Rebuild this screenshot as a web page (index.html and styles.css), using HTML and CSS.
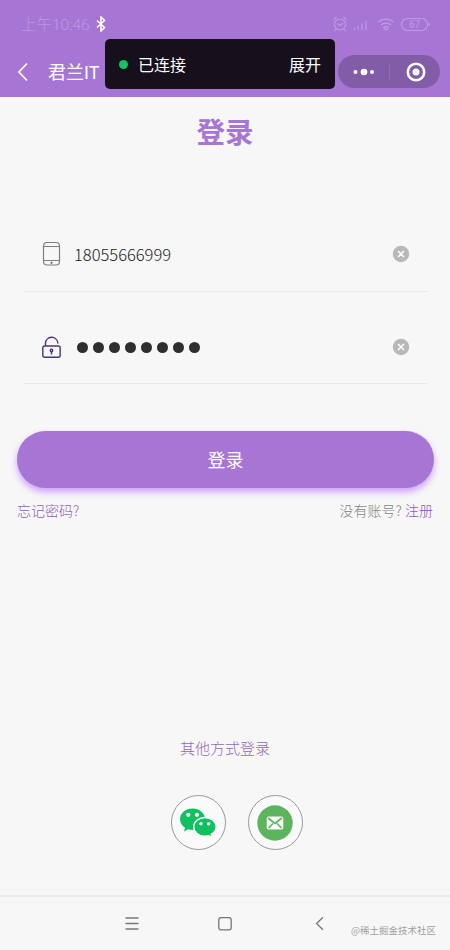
FILE: index.html
```
<!DOCTYPE html>
<html lang="zh-CN">
<head>
  <meta charset="utf-8"/>
  <title>登录</title>
  <link rel="stylesheet" href="styles.css">
</head>
<body>
  <header class="header">
    <div class="status-bar">
      <span class="time">上午10:46</span>
      <svg class="bluetooth" width="12" height="16" viewBox="0 0 12 16"><path d="M2 4.500l7.500 7L6 15V1l3.500 3.500L2 11.500"/></svg>
      <div class="status-icons">
        <svg width="98" height="18" viewBox="0 0 98 18">
          <circle cx="8" cy="9.500" r="5.500"/>
          <path d="M1.500 5l3-3M14.500 5l-3-3M5.500 8.500l2.500 2 3-2.500M4 14l-1.500 2M12 14l1.500 2"/>
          <path d="M22.500 15v-2M26 15v-4M30 15V8.500M34 15V5.500"/>
          <path d="M46.500 7a11 11 0 0 1 15 0M49 10a7.500 7.500 0 0 1 10 0M51.500 12.500a4 4 0 0 1 5 0L54 15z"/>
          <rect x="69.500" y="3.500" width="26" height="12" rx="6"/>
          <path d="M97.300 8v3"/>
          <text x="82.500" y="13.300" text-anchor="middle">67</text>
        </svg>
      </div>
    </div>
    <div class="nav-bar">
      <svg class="back" width="12" height="20" viewBox="0 0 12 20"><path d="M10 1.500L2 10l8 8.500"/></svg>
      <span class="nav-title">君兰IT</span>
      <div class="capsule">
        <svg width="22" height="10" viewBox="0 0 22 10"><circle cx="2.500" cy="5" r="2"/><circle cx="11" cy="5" r="3.300"/><circle cx="19" cy="5" r="2"/></svg>
        <i class="capsule-line"></i>
        <svg width="20" height="20" viewBox="0 0 20 20"><circle class="ring" cx="10" cy="10" r="8.200"/><circle cx="10" cy="10" r="3.500"/></svg>
      </div>
    </div>
    <div class="toast">
      <i class="dot"></i>
      <span>已连接</span>
      <span class="expand">展开</span>
    </div>
  </header>

  <main class="page">
    <h1>登录</h1>
    <div class="form">
      <div class="field phone">
        <svg class="field-icon" width="20" height="26" viewBox="0 0 20 26"><rect x="2.500" y="1.500" width="16" height="22.500" rx="3.500"/><path d="M2.500 5.500h16M2.500 19.500h16"/><circle class="fill" cx="10.500" cy="21.700" r="1"/></svg>
        <span class="value">18055666999</span>
        <svg class="clear" width="18" height="18" viewBox="0 0 18 18"><circle cx="9" cy="9" r="8.200"/><path d="M6 6l6 6M12 6l-6 6"/></svg>
      </div>
      <div class="field password">
        <svg class="field-icon" width="20" height="26" viewBox="0 0 20 26"><rect x="1.800" y="12" width="17.400" height="11.300" rx="2"/><path d="M4.500 12V9a6.200 6.200 0 0 1 12.300-.500v1M10.500 17v3.500"/><circle cx="10.500" cy="16.500" r="1.200"/></svg>
        <span class="value dots"><i></i><i></i><i></i><i></i><i></i><i></i><i></i><i></i></span>
        <svg class="clear" width="18" height="18" viewBox="0 0 18 18"><circle cx="9" cy="9" r="8.200"/><path d="M6 6l6 6M12 6l-6 6"/></svg>
      </div>
    </div>

    <button class="btn">登录</button>
    <div class="links">
      <a class="forget">忘记密码?</a>
      <span class="register">没有账号? <a>注册</a></span>
    </div>

    <p class="other-title">其他方式登录</p>
    <div class="others">
      <div class="other">
        <svg width="38" height="32" viewBox="0 0 38 32">
          <path class="wechat" d="M13.500 1.500C6.500 1.500 1 6.200 1 12.300c0 3.500 1.900 6.500 5 8.400L5 24.500l4.300-2.200c1.300.4 2.700.6 4.200.6 7 0 12.500-4.700 12.500-10.600S20.500 1.500 13.500 1.500z"/>
          <circle class="eye" cx="9.300" cy="7.800" r="2.100"/><circle class="eye" cx="18" cy="7.800" r="2.100"/>
          <path class="wechat front" d="M26 10.500c-6.400 0-11.300 4.200-11.300 9.400s4.900 9.300 11.300 9.300c1.400 0 2.600-.2 3.800-.5l3.300 1.900-.7-3.400c2.800-1.700 4.800-4.300 4.800-7.300 0-5.200-4.900-9.400-11.200-9.400z"/>
          <circle class="eye" cx="21.900" cy="16.800" r="1.700"/><circle class="eye" cx="29.600" cy="16.800" r="1.700"/>
        </svg>
      </div>
      <div class="other">
        <svg width="36" height="36" viewBox="0 0 36 36">
          <circle class="mail" cx="18" cy="18" r="17.700"/>
          <rect class="eye" x="9.700" y="11.500" width="16.600" height="13" rx="2"/>
          <path class="fold" d="M11 13l7 5.500 7-5.500M11.500 23l4.500-4.500M24.500 23L20 18.500"/>
        </svg>
      </div>
    </div>
  </main>

  <footer class="system-nav">
    <svg width="14" height="14" viewBox="0 0 14 14"><path d="M.5 1h13M.5 6.500h13M.5 12h13"/></svg>
    <svg width="14" height="14" viewBox="0 0 14 14"><rect x=".8" y=".5" width="12.400" height="12.400" rx="2.500"/></svg>
    <svg width="14" height="14" viewBox="0 0 14 14"><path d="M12 .3L5.500 6.500l6.500 6.200"/></svg>
    <span class="watermark">@稀土掘金技术社区</span>
  </footer>
</body>
</html>
```
FILE: styles.css
```
* {
  box-sizing: border-box;
}
body {
  margin: 0;
  height: 950px;
  display: flex;
  flex-direction: column;
  overflow: hidden;
  background-color: #f7f7f7;
  font-family: "Noto Sans CJK SC", sans-serif;
  font-weight: 300;
}
svg {
  display: block;
  flex: none;
  fill: none;
}

.header {
  position: relative;
  height: 97px;
  background-color: #a776d4;
}
.status-bar {
  display: flex;
  align-items: center;
  height: 48px;
  padding: 0 20px 0 21px;
}
.time {
  width: 74px;
  padding-top: 2px;
  font-family: Roboto, "Noto Sans CJK SC", sans-serif;
  font-size: 15.5px;
  line-height: 20px;
  color: #bf96e2;
  white-space: nowrap;
}
.bluetooth {
  stroke: #fff;
  stroke-width: 1.5;
}
.status-icons {
  margin-left: auto;
  stroke: #c09ae2;
  stroke-width: 1.2;
}
.status-icons text {
  font-family: Roboto, sans-serif;
  font-size: 10px;
  font-weight: 400;
  fill: #c09ae2;
  stroke: none;
}
.nav-bar {
  display: flex;
  align-items: center;
  height: 47px;
  padding: 0 10px 0 17px;
}
.back {
  stroke: #fff;
  stroke-width: 1.7;
}
.nav-title {
  margin-left: 19px;
  padding-top: 2px;
  font-family: Roboto, "Noto Sans CJK SC", sans-serif;
  font-size: 18px;
  font-weight: 400;
  line-height: 24px;
  color: #fff;
}
.capsule {
  display: flex;
  align-items: center;
  width: 102px;
  height: 33px;
  margin-left: auto;
  padding: 0 14px 0 15px;
  border-radius: 17px;
  background-color: #835ca8;
}
.capsule svg {
  fill: #fff;
}
.capsule .ring {
  fill: none;
  stroke: #fff;
  stroke-width: 2.6;
}
.capsule-line {
  width: 1px;
  height: 18px;
  margin: 0 16px 0 14px;
  background-color: #9168b6;
}
.toast {
  position: absolute;
  left: 105px;
  top: 39px;
  display: flex;
  align-items: center;
  width: 230px;
  height: 50px;
  padding: 0 14px;
  border-radius: 5px;
  background-color: #160f1c;
  color: #fff;
  font-size: 16px;
  font-weight: 400;
}
.dot {
  width: 9px;
  height: 9px;
  margin-right: 10px;
  border-radius: 50%;
  background-color: #12c263;
}
.expand {
  margin-left: auto;
}

.page {
  flex: 1;
}
h1 {
  margin: 14px 0 0;
  font-size: 28.5px;
  line-height: 40px;
  font-weight: 700;
  text-align: center;
  color: #a776d4;
}
.form {
  margin: 65px 22px 0 24px;
}
.field {
  display: flex;
  align-items: center;
  padding: 0 18px 0 17px;
  border-bottom: 1px solid #e8e8e8;
}
.phone {
  height: 76px;
}
.password {
  height: 92px;
  padding-top: 19px;
}
.field-icon {
  stroke: #7b7f88;
  stroke-width: 1.2;
}
.password .field-icon {
  stroke: #4f3478;
  stroke-width: 1.4;
}
.field-icon .fill {
  fill: #555;
  stroke: none;
}
.value {
  margin-left: 13px;
  font-size: 16.5px;
  color: #222;
}
.dots {
  display: flex;
  gap: 5px;
  margin-left: 16px;
}
.dots i {
  width: 11px;
  height: 11px;
  border-radius: 50%;
  background-color: #2e2e2e;
}
.clear {
  margin-left: auto;
  fill: #b8b8b8;
}
.clear path {
  stroke: #fff;
  stroke-width: 1.5;
}

.btn {
  display: block;
  width: 417px;
  height: 57px;
  margin: 47px 0 0 17px;
  padding: 0 0 2px;
  border: none;
  border-radius: 29px;
  background-color: #a776d4;
  box-shadow: 0 4px 7px #cf9ffc;
  color: #fff;
  font-family: inherit;
  font-size: 18px;
}
.links {
  display: flex;
  justify-content: space-between;
  margin: 12px 17px 0;
  font-size: 14px;
  line-height: 20px;
}
.forget {
  color: #8d62b3;
}
.register {
  color: #858585;
}
.register a {
  color: #9251c9;
}
.other-title {
  margin: 218px 0 0;
  font-size: 15px;
  line-height: 20px;
  text-align: center;
  color: #9468b8;
}
.others {
  display: flex;
  justify-content: center;
  gap: 22px;
  margin: 37px 0 0 23px;
}
.other {
  display: flex;
  align-items: center;
  justify-content: center;
  width: 55px;
  height: 55px;
  border: 1px solid #999;
  border-radius: 50%;
  background-color: #fafafa;
}
.wechat {
  fill: #0fc160;
}
.front {
  stroke: #fafafa;
  stroke-width: 1.5;
}
.eye {
  fill: #fafafa;
}
.mail {
  fill: #5cb55c;
}
.fold {
  stroke: #5cb55c;
  stroke-width: 1.6;
}

.system-nav {
  position: relative;
  display: flex;
  align-items: center;
  justify-content: center;
  gap: 79px;
  height: 55px;
  border-top: 2px solid #ebebeb;
}
.system-nav svg {
  stroke: #777;
  stroke-width: 1.3;
}
.watermark {
  position: absolute;
  right: 14px;
  bottom: 12px;
  font-size: 9.5px;
  font-weight: 400;
  line-height: 16px;
  color: #a0a0a0;
}
```
